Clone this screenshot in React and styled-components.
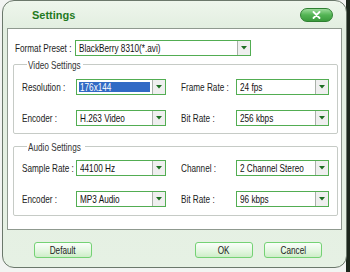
import React from 'react';
import styled, { createGlobalStyle } from 'styled-components';

const Global = createGlobalStyle`
  html, body { margin: 0; padding: 0; }
  body {
    width: 350px;
    height: 272px;
    overflow: hidden;
    background: linear-gradient(90deg, #f2f4f2 0, #f2f4f2 346px, #1c261c 346px);
    font-family: "Liberation Sans", Arial, sans-serif;
  }
`;

const Window = styled.div`
  margin-left: 2px;
  width: 345px;
  height: 268px;
  box-sizing: border-box;
  border: 1px solid #6b786b;
  border-radius: 12px;
  background: linear-gradient(#eef6ec, #e2eee0 28px, #e6f1e4);
  display: flex;
  flex-direction: column;
  overflow: hidden;
`;

const TitleBar = styled.div`
  height: 27px;
  flex: none;
  display: flex;
  align-items: center;
  justify-content: space-between;
  padding: 0 13px 0 29px;
`;

const Title = styled.div`
  font-weight: bold;
  font-size: 11px;
  color: #1f7a22;
`;

const CloseButton = styled.div`
  width: 33px;
  height: 14px;
  box-sizing: border-box;
  border-radius: 7px;
  border: 1px solid #2e7f31;
  background: linear-gradient(#9ddb9b, #53b454 50%, #3b9b3d);
  display: flex;
  align-items: center;
  justify-content: center;
`;

const Panel = styled.div`
  margin: 0 4px;
  height: 202px;
  flex: none;
  box-sizing: border-box;
  border: 1px solid #8f998f;
  background: #fff;
  padding: 11px 3px 0 5px;
  display: flex;
  flex-direction: column;
`;

const FormatRow = styled.div`
  display: flex;
  align-items: center;
  height: 16px;
  padding-left: 2px;
`;

/* Narrow UI text: the reference's font is condensed, so the glyphs are squeezed horizontally */
const Narrow = styled.span`
  display: inline-block;
  font-size: 10.5px;
  line-height: 12px;
  white-space: nowrap;
  transform: scaleX(0.78);
  transform-origin: ${(p) => (p.$center ? 'center' : 'left')} center;
`;

const Label = styled.div`
  color: #222;
  white-space: nowrap;
  width: ${(p) => (p.$w ? `${p.$w}px` : 'auto')};
  padding-left: ${(p) => p.$indent || 0}px;
  overflow: visible;
  min-width: 0;
  display: flex;
  align-items: center;
`;

const Group = styled.fieldset`
  margin: ${(p) => p.$mt}px 0 0 0;
  border: 1px solid #c6cbc6;
  border-radius: 2px;
  padding: ${(p) => p.$pt}px 8px ${(p) => p.$pb}px 8px;
  min-inline-size: 0;
`;

const Legend = styled.legend`
  line-height: 12px;
  color: #333;
  padding: 0 1px;
  margin-left: 5px;
  width: ${(p) => p.$w}px;
  overflow: visible;
`;

const Grid = styled.div`
  display: grid;
  grid-template-columns: 54px 90px 1fr 93px;
  grid-auto-rows: 16px;
  row-gap: 15px;
  align-items: center;
`;

const SelectBox = styled.div`
  display: flex;
  height: 16px;
  box-sizing: border-box;
  width: ${(p) => (p.$w ? `${p.$w}px` : 'auto')};
  border: 1px solid #52ad52;
  background: #fff;
`;

const SelectText = styled.div`
  flex: 1;
  display: flex;
  align-items: stretch;
  padding: 2px;
  min-width: 0;
  overflow: hidden;
`;

const Value = styled.span`
  flex: ${(p) => (p.$selected ? 1 : 'none')};
  display: flex;
  align-items: center;
  padding-left: 1px;
  color: ${(p) => (p.$selected ? '#fff' : '#111')};
  background: ${(p) => (p.$selected ? '#316ac5' : 'transparent')};
  white-space: nowrap;
`;

const DropButton = styled.div`
  width: 12px;
  flex: none;
  background: #efefef;
  border-left: 1px solid #a9b1a9;
  display: flex;
  align-items: center;
  justify-content: center;
`;

const Footer = styled.div`
  flex: 1;
  display: flex;
  align-items: flex-start;
  justify-content: space-between;
  padding: 12px 24px 0 31px;
`;

const ButtonGroup = styled.div`
  display: flex;
  gap: 11px;
`;

const Button = styled.div`
  width: 58px;
  height: 16px;
  box-sizing: border-box;
  border: 1px solid #74d274;
  border-radius: 3px;
  background: linear-gradient(#fafefa, #e2f6df 60%, #cdeec8);
  display: flex;
  align-items: center;
  justify-content: center;
  color: #222;
`;

const Arrow = () => (
  <svg width="6" height="4" viewBox="0 0 6 4">
    <path d="M0 0 H6 L3 3.5 Z" fill="#1d6e22" />
  </svg>
);

const Select = ({ value, selected, w }) => (
  <SelectBox $w={w}>
    <SelectText>
      <Value $selected={selected}>
        <Narrow>{value}</Narrow>
      </Value>
    </SelectText>
    <DropButton>
      <Arrow />
    </DropButton>
  </SelectBox>
);

const FieldLabel = ({ children, indent, w }) => (
  <Label $indent={indent} $w={w}>
    <Narrow>{children}</Narrow>
  </Label>
);

export default function App() {
  return (
    <>
      <Global />
      <Window>
        <TitleBar>
          <Title>Settings</Title>
          <CloseButton>
            <svg width="9" height="8" viewBox="0 0 9 8">
              <path d="M1.5 1 L7.5 7 M7.5 1 L1.5 7" stroke="#fff" strokeWidth="1.8" strokeLinecap="round" />
            </svg>
          </CloseButton>
        </TitleBar>
        <Panel>
          <FormatRow>
            <FieldLabel w={60}>Format Preset :</FieldLabel>
            <Select w={176} value="BlackBerry 8310(*.avi)" />
          </FormatRow>
          <Group $mt={2} $pt={8} $pb={7}>
            <Legend $w={54}>
              <Narrow>Video Settings</Narrow>
            </Legend>
            <Grid>
              <FieldLabel>Resolution :</FieldLabel>
              <Select value="176x144" selected />
              <FieldLabel indent={15}>Frame Rate :</FieldLabel>
              <Select value="24 fps" />
              <FieldLabel>Encoder :</FieldLabel>
              <Select value="H.263 Video" />
              <FieldLabel indent={15}>Bit Rate :</FieldLabel>
              <Select value="256 kbps" />
            </Grid>
          </Group>
          <Group $mt={6} $pt={7} $pb={8}>
            <Legend $w={56}>
              <Narrow>Audio Settings</Narrow>
            </Legend>
            <Grid>
              <FieldLabel>Sample Rate :</FieldLabel>
              <Select value="44100 Hz" />
              <FieldLabel indent={15}>Channel :</FieldLabel>
              <Select value="2 Channel Stereo" />
              <FieldLabel>Encoder :</FieldLabel>
              <Select value="MP3 Audio" />
              <FieldLabel indent={15}>Bit Rate :</FieldLabel>
              <Select value="96 kbps" />
            </Grid>
          </Group>
        </Panel>
        <Footer>
          <Button>
            <Narrow $center>Default</Narrow>
          </Button>
          <ButtonGroup>
            <Button>
              <Narrow $center>OK</Narrow>
            </Button>
            <Button>
              <Narrow $center>Cancel</Narrow>
            </Button>
          </ButtonGroup>
        </Footer>
      </Window>
    </>
  );
}
